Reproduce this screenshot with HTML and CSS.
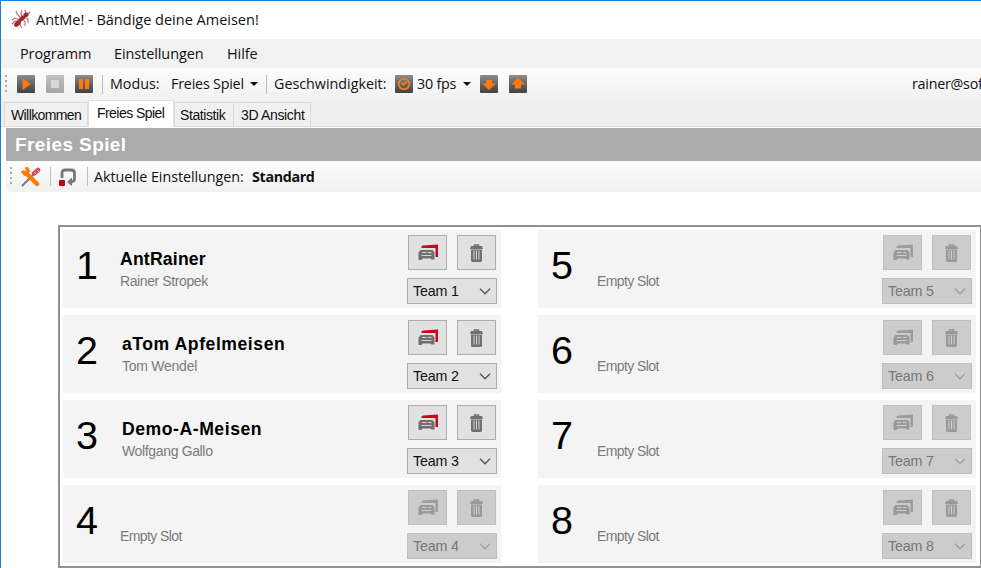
FILE: index.html
```
<!DOCTYPE html>
<html lang="de">
<head>
<meta charset="utf-8">
<title>AntMe! - Bändige deine Ameisen!</title>
<link rel="stylesheet" href="styles.css">
</head>
<body>
<svg class="defs" aria-hidden="true">
  <defs>
    <linearGradient id="tile" x1="0" y1="0" x2="0" y2="1"><stop offset="0" stop-color="#8c8c8c"/><stop offset=".55" stop-color="#606060"/><stop offset="1" stop-color="#424242"/></linearGradient>
    <linearGradient id="tile-off" x1="0" y1="0" x2="0" y2="1"><stop offset="0" stop-color="#c2c2c2"/><stop offset="1" stop-color="#a4a4a4"/></linearGradient>
  </defs>
  <symbol id="cards" viewBox="0 0 20 17">
    <path fill="currentColor" d="M3.500 2.500L5 1.500L20 .5V13H17.500V4H3.500Z"/>
    <path fill="#707070" d="M2.500 6H14.500L16.500 8.500V15.500H13.500L12.500 14.500H4.500L3.500 16H.5V8.500Z"/>
    <path fill="none" stroke="#d4d4d4" d="M4 8.500H8.500M10 8.500H13.500M3.500 11.500H13.500"/>
  </symbol>
  <symbol id="bin" viewBox="0 0 13 18">
    <path fill="none" stroke="#707070" stroke-width="1.500" d="M4.500 2.500V1H8.500V2.500"/>
    <path fill="#707070" d="M1 2H12L13 5H0ZM1 5.500H12V17L11 18H2L1 17Z"/>
    <path stroke="#d2d2d2" stroke-width="1" d="M4 6.500V15.500M6.500 6.500V15.500M9 6.500V15.500"/>
  </symbol>
  <symbol id="chev" viewBox="0 0 12 7"><path fill="none" stroke="currentColor" stroke-width="1.400" d="M1 .8L6 5.800L11 .8"/></symbol>
</svg>
<div class="window">
  <header class="titlebar">
    <svg class="ant" viewBox="0 0 20 20"><g fill="none" stroke="#a87472" stroke-width="1.100"><path d="M10 9L6 5L5 2M11 8L10 4L11 1M13 8L17 10L17 14M12 10L14 13V17M9 11L4 9L1 11M8 12L4 12L1 15M9 12L9 16L11 19M15 5L14 1M16 6L19 3"/></g><g fill="#a3272a"><ellipse cx="6.500" cy="14.500" rx="4" ry="2.400" transform="rotate(-45 6.500 14.500)"/><ellipse cx="11" cy="9.500" rx="3.800" ry="2.100" transform="rotate(-42 11 9.500)"/><ellipse cx="15" cy="6" rx="2.600" ry="2.200" transform="rotate(-25 15 6)"/></g></svg>
    <span>AntMe! - Bändige deine Ameisen!</span>
  </header>
  <nav class="menu"><span class="m1">Programm</span><span class="m2">Einstellungen</span><span class="m3">Hilfe</span></nav>
  <div class="toolbar">
    <i class="grip"></i>
    <svg class="tile play" viewBox="0 0 18 18"><rect width="18" height="18" rx="1" fill="url(#tile)"/><path fill="#ff7a0a" d="M5.500 3L14 9L5.500 15Z"/></svg>
    <svg class="tile stop" viewBox="0 0 18 18"><rect width="18" height="18" rx="1" fill="url(#tile-off)"/><path fill="#d6d6d6" d="M5 5H13V13H5Z"/></svg>
    <svg class="tile pause" viewBox="0 0 18 18"><rect width="18" height="18" rx="1" fill="url(#tile)"/><path fill="#ff7a0a" d="M4 4H8V14H4ZM10 4H14V14H10Z"/></svg>
    <i class="sep"></i>
    <span class="t-mode">Modus:</span><span class="t-free">Freies Spiel</span><i class="drop"></i>
    <i class="sep sep-b"></i>
    <span class="t-speed">Geschwindigkeit:</span>
    <svg class="tile clock" viewBox="0 0 18 18"><rect width="18" height="18" rx="1" fill="url(#tile)"/><circle cx="9" cy="9" r="5.300" fill="none" stroke="#ee7d20" stroke-width="1.900"/><path fill="none" stroke="#f07c1c" stroke-width="1.900" d="M6.500 7.500L8.500 9.800L11.500 6.500"/></svg>
    <span class="t-fps">30 fps</span><i class="drop"></i>
    <svg class="tile down" viewBox="0 0 18 18"><rect width="18" height="18" rx="1" fill="url(#tile)"/><path fill="#ff7a0a" d="M6 5H12V8.500H16L9 15L2 8.500H6Z"/></svg>
    <svg class="tile up" viewBox="0 0 18 18"><rect width="18" height="18" rx="1" fill="url(#tile)"/><path fill="#ff7a0a" d="M9 3L16 9.500H12V13.500H6V9.500H2Z"/></svg>
    <span class="user">rainer@sof</span>
  </div>
  <div class="tabs"><span class="tab w1">Willkommen</span><span class="tab active">Freies Spiel</span><span class="tab w3">Statistik</span><span class="tab w4">3D Ansicht</span></div>
  <main>
    <h1><span>Freies Spiel</span></h1>
    <div class="toolbar sub">
      <i class="grip"></i>
      <svg class="tools" viewBox="0 0 20 20"><path stroke="#777" stroke-width="2" d="M1 19L12 8"/><path stroke="#d94b50" stroke-width="4.500" stroke-linecap="round" d="M13 6.500L17 3"/><path stroke="#f6b3b3" d="M13 5L15.500 7.500M15.500 2.500L18 5"/><path stroke="#ff7a0a" stroke-width="4.500" stroke-linecap="round" d="M5 6L16 17"/><path fill="none" stroke="#ff7a0a" stroke-width="3.200" d="M1 4L4 7L7.500 4L5 0"/></svg>
      <i class="sep"></i>
      <svg class="loop" viewBox="0 0 18 18"><path fill="none" stroke="#777" stroke-width="2.800" d="M3 10V5Q3 2 6 2H12Q15.500 2 15.500 5V11Q15.500 14 11 14"/><path fill="#777" d="M8 14L13 9.500V18Z"/><rect x="0" y="12" width="6" height="6" rx="1" fill="#c50010"/></svg>
      <i class="sep"></i>
      <span class="t-set">Aktuelle Einstellungen:</span><b class="t-std">Standard</b>
    </div>
    <section class="slots">
      <article class="card"><span class="num">1</span><div class="who"><b class="n1">AntRainer</b><small class="a1">Rainer Stropek</small></div><div class="controls"><button><svg class="cards"><use href="#cards"/></svg></button><button><svg class="bin"><use href="#bin"/></svg></button><div class="select"><span>Team 1</span><svg><use href="#chev"/></svg></div></div></article>
      <article class="card"><span class="num">5</span><div class="who r"><small>Empty Slot</small></div><div class="controls off"><button><svg class="cards"><use href="#cards"/></svg></button><button><svg class="bin"><use href="#bin"/></svg></button><div class="select"><span>Team 5</span><svg><use href="#chev"/></svg></div></div></article>
      <article class="card"><span class="num">2</span><div class="who in"><b class="n2">aTom Apfelmeisen</b><small class="a2">Tom Wendel</small></div><div class="controls"><button><svg class="cards"><use href="#cards"/></svg></button><button><svg class="bin"><use href="#bin"/></svg></button><div class="select"><span>Team 2</span><svg><use href="#chev"/></svg></div></div></article>
      <article class="card"><span class="num">6</span><div class="who r"><small>Empty Slot</small></div><div class="controls off"><button><svg class="cards"><use href="#cards"/></svg></button><button><svg class="bin"><use href="#bin"/></svg></button><div class="select"><span>Team 6</span><svg><use href="#chev"/></svg></div></div></article>
      <article class="card"><span class="num">3</span><div class="who in"><b class="n3">Demo-A-Meisen</b><small class="a3">Wolfgang Gallo</small></div><div class="controls"><button><svg class="cards"><use href="#cards"/></svg></button><button><svg class="bin"><use href="#bin"/></svg></button><div class="select"><span>Team 3</span><svg><use href="#chev"/></svg></div></div></article>
      <article class="card"><span class="num">7</span><div class="who r"><small>Empty Slot</small></div><div class="controls off"><button><svg class="cards"><use href="#cards"/></svg></button><button><svg class="bin"><use href="#bin"/></svg></button><div class="select"><span>Team 7</span><svg><use href="#chev"/></svg></div></div></article>
      <article class="card"><span class="num">4</span><div class="who"><small>Empty Slot</small></div><div class="controls off"><button><svg class="cards"><use href="#cards"/></svg></button><button><svg class="bin"><use href="#bin"/></svg></button><div class="select"><span>Team 4</span><svg><use href="#chev"/></svg></div></div></article>
      <article class="card"><span class="num">8</span><div class="who r"><small>Empty Slot</small></div><div class="controls off"><button><svg class="cards"><use href="#cards"/></svg></button><button><svg class="bin"><use href="#bin"/></svg></button><div class="select"><span>Team 8</span><svg><use href="#chev"/></svg></div></div></article>
    </section>
  </main>
</div>
</body>
</html>
```
FILE: styles.css
```
* { box-sizing: border-box; }
body { margin: 0; background: #fff; font-family: "Open Sans", "Noto Sans", sans-serif; font-size: 14.5px; color: #111; overflow: hidden; }
.defs { position: absolute; width: 0; height: 0; }
.window { width: 981px; height: 568px; border: solid #1b80d8; border-width: 1px 0 0 1px; overflow: hidden; white-space: nowrap; }
svg { display: block; flex: none; }
span, b { flex: none; }
.titlebar { height: 38px; display: flex; align-items: center; padding: 0 0 2px 10px; }
.ant { width: 20px; height: 20px; margin-right: 5px; }
.menu { height: 29px; background: #f2f2f2; display: flex; align-items: center; padding: 0 0 1px 19px; letter-spacing: -.1px; }
.menu .m1 { width: 94px; }
.menu .m2 { width: 113px; }
.toolbar { height: 32px; display: flex; align-items: center; background: linear-gradient(#fcfcfc, #f1f1f1); padding-left: 4px; font-size: 14.3px; }
.toolbar > span, .toolbar > b { padding-bottom: 1px; }
.grip { flex: none; width: 2px; height: 19px; margin-right: 10px; background: repeating-linear-gradient(#aaa 0 2px, transparent 2px 5px); }
.tile { width: 18px; height: 18px; margin-right: 11px; }
.sep { flex: none; width: 1px; height: 19px; background: #bdbdbd; margin-right: 7px; }
.pause { margin-right: 9px; }
.t-mode { width: 61px; }
.t-free { width: 79px; letter-spacing: -.2px; }
.drop { flex: none; border: solid transparent; border-width: 4px 4px 0; border-top-color: #111; }
.sep-b { margin: 0 7px 0 8px; }
.t-speed { width: 121px; }
.clock { margin-right: 4px; }
.t-fps { width: 46px; letter-spacing: -.2px; }
.down { margin-left: 9px; }
.user { margin-left: auto; width: 69px; letter-spacing: -.25px; }
.tabs { height: 27px; background: #efefef; display: flex; align-items: flex-end; padding-left: 3px; font: 14px "Liberation Sans", sans-serif; border-bottom: 1px solid #dcdcdc; }
.tab { height: 24px; border: 1px solid #dadada; border-bottom: 0; display: flex; align-items: center; padding-left: 6px; background: #f0f0f0; letter-spacing: -.6px; }
.w1 { width: 84px; }
.active { width: 86px; height: 27px; background: #fff; margin-bottom: -1px; padding: 0 0 3px 8px; border-color: #e0e0e0; letter-spacing: -.55px; }
.w3 { width: 60px; padding-left: 5px; letter-spacing: -.4px; }
.w4 { width: 77px; border-left: 0; padding-left: 7px; letter-spacing: -.35px; }
main { margin-left: 5px; }
h1 { margin: 1px 0 0; height: 33px; background: #ababab; color: #fff; font: bold 19px/34px "Liberation Sans", sans-serif; letter-spacing: .4px; padding-left: 9px; }
.sub { height: 31px; border-bottom-left-radius: 5px; background: linear-gradient(#fdfdfd, #f1f1f1); }
.sub .grip { margin-right: 9px; }
.tools { width: 20px; height: 20px; margin-right: 9px; }
.sub .sep { margin-right: 8px; }
.loop { width: 18px; height: 18px; margin-right: 10px; }
.sub .loop + .sep { margin-right: 6px; }
.t-set { width: 158px; letter-spacing: -.05px; }
.t-std { letter-spacing: -.35px; }
.slots { margin: 33px 0 0 52px; width: 923px; height: 343px; border: 2px solid #929292; border-right-width: 1px; display: grid; grid-template-columns: 438px 438px; grid-auto-rows: 78px; gap: 7px 37px; padding: 3px; }
.card { background: #f4f4f4; display: flex; font-family: "Liberation Sans", sans-serif; }
.num { width: 57px; padding-left: 13px; font-size: 39.5px; line-height: 70px; color: #000; }
.who { width: 288px; padding-top: 18px; display: flex; flex-direction: column; }
.who.in { padding-left: 2px; }
.who.r { padding-left: 2px; }
.who b { height: 25px; line-height: 22px; font-size: 17.6px; color: #000; }
.n1 { letter-spacing: .2px; }
.n2 { letter-spacing: .55px; }
.n3 { letter-spacing: .55px; }
.who small { font-size: 14px; line-height: 16px; color: #7b7b7b; letter-spacing: -.6px; }
.who small.a1 { letter-spacing: -.4px; }
.who small.a2 { letter-spacing: -.25px; }
.who small.a3 { letter-spacing: -.35px; }
.who small:first-child { margin-top: 25px; }
.controls { width: 90px; padding-top: 5px; display: flex; flex-wrap: wrap; align-content: flex-start; gap: 8px 10px; color: #111; margin-left: -1px; }
button { margin: 0; padding: 0; width: 39px; height: 35px; background: #e1e1e1; border: 1px solid #adadad; display: flex; align-items: center; justify-content: center; color: #c40c18; }
button:first-child { margin-left: 1px; margin-right: 1px; }
button:first-child + button { margin-left: -1px; margin-right: 1px; }
.cards { width: 20px; height: 17px; }
.bin { width: 13px; height: 18px; }
.select { width: 90px; height: 26px; border: 1px solid #adadad; background: #e1e1e1; display: flex; align-items: center; justify-content: space-between; padding: 0 5px; font-size: 14.3px; letter-spacing: -.2px; }
.select span { line-height: 16px; padding-bottom: 1px; }
.select svg { width: 12px; height: 7px; color: #555; }
.off button, .off .select { background: #ccc; border-color: #bfbfbf; color: #777; }
.off button svg { opacity: .55; }
.off .select svg { color: #a0a0a0; }
```
